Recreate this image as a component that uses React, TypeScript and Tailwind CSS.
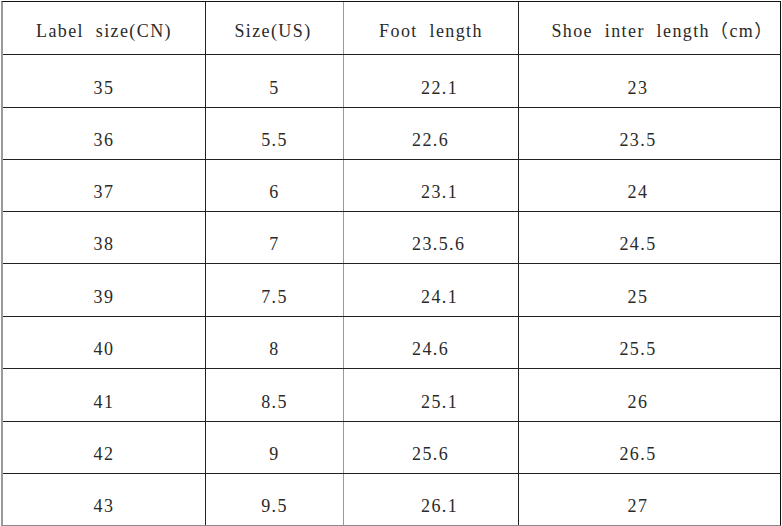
const rows = [
  { cn: "35", us: "5", foot: "22.1", footPad: "pl-[77px]", shoe: "23" },
  { cn: "36", us: "5.5", foot: "22.6", footPad: "pl-[68px]", shoe: "23.5" },
  { cn: "37", us: "6", foot: "23.1", footPad: "pl-[77px]", shoe: "24" },
  { cn: "38", us: "7", foot: "23.5.6", footPad: "pl-[68px]", shoe: "24.5" },
  { cn: "39", us: "7.5", foot: "24.1", footPad: "pl-[77px]", shoe: "25" },
  { cn: "40", us: "8", foot: "24.6", footPad: "pl-[68px]", shoe: "25.5" },
  { cn: "41", us: "8.5", foot: "25.1", footPad: "pl-[77px]", shoe: "26" },
  { cn: "42", us: "9", foot: "25.6", footPad: "pl-[68px]", shoe: "26.5" },
  { cn: "43", us: "9.5", foot: "26.1", footPad: "pl-[77px]", shoe: "27" },
];

// row heights so lines land on 53,106,158,210,262,315,367,420,472,524
const heights = ["h-[53px]", "h-[52px]", "h-[52px]", "h-[52px]", "h-[53px]", "h-[52px]", "h-[53px]", "h-[52px]", "h-[52px]"];

export default function App() {
  return (
    <div className="h-[526px] w-[782px] overflow-hidden bg-white pl-px pt-px font-['Liberation_Serif','Noto_Sans_CJK_SC',serif] text-[18px] leading-[20px] tracking-[1.4px] text-[#2a2a2a]">
      <div className="w-[780px] border-t border-r border-b border-t-[#111] border-r-[#111] border-b-[#8a8a8a] border-l-2 border-l-[#9a9a9a]">
        {/* header */}
        <div className="grid h-[52px] grid-cols-[202px_138px_175px_262px]">
          <div className="flex items-end justify-center pb-[13px] whitespace-pre">Label  size(CN)</div>
          <div className="flex items-end justify-center border-l border-[#222] pb-[13px] pr-[3px] whitespace-pre">Size(US)</div>
          <div className="flex items-end justify-center border-l border-[#9a9a9a] pb-[13px] whitespace-pre">Foot  length</div>
          <div className="flex items-end justify-center border-l border-[#222] pb-[13px] pl-[26px] whitespace-pre">Shoe  inter  length（cm）</div>
        </div>

        {rows.map((r, i) => (
          <div key={r.cn} className={`grid grid-cols-[202px_138px_175px_262px] border-t border-[#222] ${heights[i]}`}>
            <div className="flex items-end justify-center pb-[9px]">{r.cn}</div>
            <div className="flex items-end justify-center border-l border-[#222] pb-[9px]">{r.us}</div>
            <div className={`flex items-end border-l border-[#9a9a9a] pb-[9px] ${r.footPad}`}>{r.foot}</div>
            <div className="flex items-end justify-center border-l border-[#222] pb-[9px] pr-[23px]">{r.shoe}</div>
          </div>
        ))}
      </div>
    </div>
  );
}
